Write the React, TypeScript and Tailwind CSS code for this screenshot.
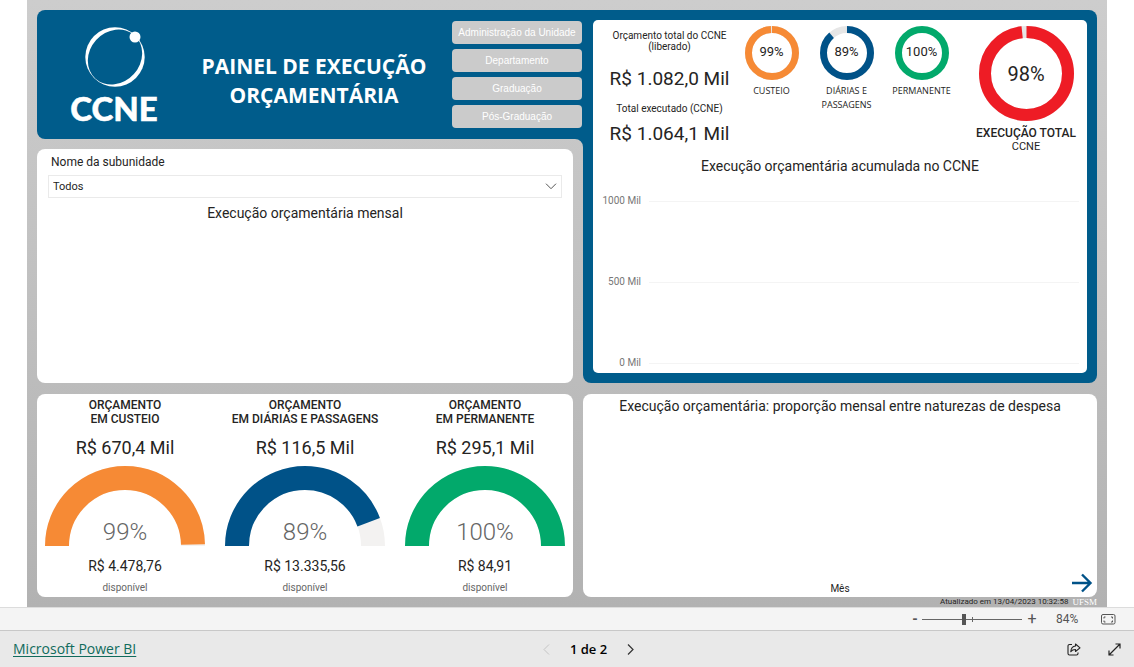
import { useState } from "react";

type Slice = {
  label: string;
  percent: number;
  text: string;
  color: string;
};

const donuts: Slice[] = [
  { label: "CUSTEIO", percent: 99.3, text: "99%", color: "#f68a35" },
  { label: "DIÁRIAS E PASSAGENS", percent: 88.6, text: "89%", color: "#005288" },
  { label: "PERMANENTE", percent: 100, text: "100%", color: "#02a96b" },
];

const gauges = [
  {
    name: "EM CUSTEIO",
    total: "R$ 670,4 Mil",
    percent: 99.3,
    text: "99%",
    available: "R$ 4.478,76",
    color: "#f68a35",
  },
  {
    name: "EM DIÁRIAS E PASSAGENS",
    total: "R$ 116,5 Mil",
    percent: 88.6,
    text: "89%",
    available: "R$ 13.335,56",
    color: "#005288",
  },
  {
    name: "EM PERMANENTE",
    total: "R$ 295,1 Mil",
    percent: 100,
    text: "100%",
    available: "R$ 84,91",
    color: "#02a96b",
  },
];

const units = [
  "Administração da Unidade",
  "Departamento",
  "Graduação",
  "Pós-Graduação",
];

const Logo = () => (
  <svg width="92" height="104" viewBox="-2 0 92 104" role="img" aria-label="CCNE">
    <mask id="ring">
      <rect x="-2" width="92" height="104" fill="#fff" />
      <ellipse
        cx="45"
        cy="34"
        rx="29.2"
        ry="25.4"
        transform="rotate(-48 45 34)"
        fill="#000"
      />
    </mask>
    <circle cx="45" cy="34" r="29.7" fill="#fff" mask="url(#ring)" />
    <circle cx="65" cy="14" r="5.5" fill="#fff" />
    <text
      x="44"
      y="98"
      textAnchor="middle"
      fill="#fff"
      stroke="#fff"
      strokeWidth="0.5"
      fontSize="33"
      fontWeight="900"
      fontFamily="Lato, sans-serif"
    >
      CCNE
    </text>
  </svg>
);

const Donut = ({
  slice,
  size,
  thickness,
}: {
  slice: Slice;
  size: number;
  thickness: number;
}) => {
  const r = (size - thickness) / 2;
  return (
    <svg width={size} height={size} viewBox={`0 0 ${size} ${size}`}>
      <circle
        cx={size / 2}
        cy={size / 2}
        r={r}
        fill="none"
        stroke="#e6e6e6"
        strokeWidth={slice.percent < 100 ? thickness : 0}
      />
      <circle
        cx={size / 2}
        cy={size / 2}
        r={r}
        fill="none"
        stroke={slice.color}
        strokeWidth={thickness}
        pathLength={100}
        strokeDasharray={`${slice.percent} ${100 - slice.percent}`}
        transform={`rotate(-90 ${size / 2} ${size / 2})`}
      />
    </svg>
  );
};

const Gauge = ({ percent, color }: { percent: number; color: string }) => (
  <svg width="160" height="80" viewBox="0 0 160 80">
    <path
      d="M12 80a68 68 0 0 1 136 0"
      fill="none"
      stroke="#f3f2f1"
      strokeWidth="24"
    />
    <path
      d="M12 80a68 68 0 0 1 136 0"
      fill="none"
      stroke={color}
      strokeWidth="24"
      pathLength={100}
      strokeDasharray={`${percent} 100`}
    />
  </svg>
);

const Header = () => (
  <header className="flex h-[129px] items-center rounded-l-lg bg-[#005c8b] pl-[31px] pr-px">
    <Logo />
    <h1 className="grow pt-3 pl-4 text-center text-[21px] leading-[29px] font-bold text-white font-['Open_Sans',sans-serif]">
      PAINEL DE EXECUÇÃO
      <br />
      ORÇAMENTÁRIA
    </h1>
    <nav className="flex w-[130px] flex-col gap-[5px]">
      {units.map((unit) => (
        <button
          key={unit}
          className="h-[23px] rounded bg-[#cbcbcb] text-[10px] whitespace-nowrap text-white font-['Liberation_Sans',sans-serif]"
        >
          {unit}
        </button>
      ))}
    </nav>
  </header>
);

const MonthlyCard = () => (
  <section className="flex grow flex-col rounded-lg bg-white px-[11px] pt-1">
    <label htmlFor="subunidade" className="px-[3px] text-xs leading-[18px]">
      Nome da subunidade
    </label>
    <div className="relative mt-1 flex items-center">
      <select
        id="subunidade"
        className="h-[23px] w-full appearance-none border border-[#eaeaea] bg-white px-1 pt-0.5 text-[11px]"
      >
        <option>Todos</option>
      </select>
      <svg
        className="pointer-events-none absolute right-[5px]"
        width="12"
        height="7"
        viewBox="0 0 12 7"
        fill="none"
        stroke="#555"
      >
        <path d="M1 .7l5 5 5-5" />
      </svg>
    </div>
    <h2 className="mt-[5px] text-center text-sm">Execução orçamentária mensal</h2>
  </section>
);

const Summary = () => {
  const total: Slice = {
    label: "EXECUÇÃO TOTAL",
    percent: 98.3,
    text: "98%",
    color: "#ee1c25",
  };

  return (
    <div className="grid grid-cols-[141fr_75fr_75fr_75fr_128fr] text-center">
      <div className="pl-3 pt-2.5 whitespace-nowrap">
        <p className="text-[10px] leading-[11px]">
          Orçamento total do CCNE
          <br />
          (liberado)
        </p>
        <p className="mt-4 text-[19px] leading-[22px]">R$ 1.082,0 Mil</p>
        <p className="mt-3 text-[10px] leading-[14px]">Total executado (CCNE)</p>
        <p className="mt-[7px] text-[19px] leading-[22px]">R$ 1.064,1 Mil</p>
      </div>
      {donuts.map((slice) => (
        <div key={slice.label} className="flex flex-col items-center pt-1.5">
          <div className="relative">
            <Donut slice={slice} size={54} thickness={7} />
            <span className="absolute inset-0 flex items-center justify-center pb-0.5 text-[13px]">
              {slice.text}
            </span>
          </div>
          <p className="mt-1 text-[9px] leading-[14px] font-['Open_Sans',sans-serif]">
            {slice.label}
          </p>
        </div>
      ))}
      <div className="flex flex-col items-center pt-1.5 pl-1.5">
        <div className="relative">
          <Donut slice={total} size={95} thickness={12} />
          <span className="absolute inset-0 flex items-center justify-center text-xl">
            {total.text}
          </span>
        </div>
        <p className="mt-[5px] whitespace-nowrap text-xs leading-[14px] font-medium">
          {total.label}
        </p>
        <p className="text-[11px] leading-[14px]">CCNE</p>
      </div>
    </div>
  );
};

const AccumulatedChart = () => (
  <div className="flex grow flex-col pb-[3px]">
    <h2 className="mt-0.5 text-center text-sm">
      Execução orçamentária acumulada no CCNE
    </h2>
    <div className="mt-[18px] flex grow flex-col justify-between pr-2">
      {["1000 Mil", "500 Mil", "0 Mil"].map((tick) => (
        <div key={tick} className="flex items-center gap-2">
          <span className="w-12 text-right text-[10px] leading-[14px] text-[#777]">
            {tick}
          </span>
          <span className="h-px grow bg-[#f4f4f4]" />
        </div>
      ))}
    </div>
  </div>
);

const GaugesCard = () => (
  <section className="rounded-lg bg-white pt-1">
    <div className="-mx-0.5 grid grid-cols-3 text-center">
      {gauges.map((gauge) => (
        <div key={gauge.name} className="flex flex-col items-center">
          <h3 className="whitespace-nowrap text-xs leading-[14px] font-medium">
            ORÇAMENTO
            <br />
            {gauge.name}
          </h3>
          <p className="mt-[11px] text-lg leading-[22px]">{gauge.total}</p>
          <div className="relative mt-[7px]">
            <Gauge percent={gauge.percent} color={gauge.color} />
            <span className="absolute inset-x-0 bottom-0 text-2xl leading-7 font-light text-[#666]">
              {gauge.text}
            </span>
          </div>
          <p className="mt-[11px] text-sm leading-[18px]">{gauge.available}</p>
          <p className="mt-1.5 text-[10px] leading-[14px] text-[#666]">
            disponível
          </p>
        </div>
      ))}
    </div>
  </section>
);

const ProportionCard = () => (
  <section className="flex flex-col rounded-lg bg-white">
    <h2 className="pt-0.5 text-center text-sm">
      Execução orçamentária: proporção mensal entre naturezas de despesa
    </h2>
    <div className="mt-auto grid grid-cols-[1fr_auto_1fr] items-end">
      <p className="col-start-2 pb-px text-[10px] leading-[14px]">Mês</p>
      <button
        aria-label="Próxima página do painel"
        className="justify-self-end pr-1 pb-1"
      >
        <svg
          width="22"
          height="20"
          viewBox="0 0 22 20"
          fill="none"
          stroke="#005288"
          strokeWidth="2.400"
        >
          <path d="M1 10h18M11 1.500l8.500 8.500-8.500 8.500" />
        </svg>
      </button>
    </div>
  </section>
);

const ZoomBar = () => {
  const [zoom, setZoom] = useState(84);

  return (
    <div className="flex h-6 items-center justify-end border-y border-t-[#dcdcdc] border-b-[#c8c8c8] bg-[#f4f4f4] pr-[18px] text-[#555]">
      <button
        aria-label="Reduzir zoom"
        onClick={() => setZoom(zoom - 10)}
        className="flex w-3.5 justify-center text-sm font-bold leading-none"
      >
        -
      </button>
      <div className="relative flex items-center">
        <input
          type="range"
          aria-label="Zoom"
          min={0}
          max={200}
          value={zoom}
          onChange={(e) => setZoom(Number(e.target.value))}
          className="h-[11px] w-[100px] appearance-none bg-[linear-gradient(#666,#666)] bg-[length:100%_1px] bg-center bg-no-repeat [&::-webkit-slider-thumb]:h-[11px] [&::-webkit-slider-thumb]:w-1 [&::-webkit-slider-thumb]:appearance-none [&::-webkit-slider-thumb]:bg-[#555]"
        />
        <span className="absolute left-1/2 h-[5px] w-px bg-[#666]" />
      </div>
      <button
        aria-label="Aumentar zoom"
        onClick={() => setZoom(zoom + 10)}
        className="flex w-5 justify-center text-base leading-none"
      >
        +
      </button>
      <span className="w-[45px] pl-3.5 text-xs">{zoom}%</span>
      <button aria-label="Ajustar à página" className="ml-3.5">
        <svg
          width="15"
          height="11"
          viewBox="0 0 15 11"
          fill="none"
          stroke="currentColor"
        >
          <rect x=".5" y=".5" width="13.500" height="9.500" rx="1.500" />
          <path d="M3 4.500V3h1.500M10 3h1.500v1.500M11.500 6.500V8H10M4.500 8H3V6.500" />
        </svg>
      </button>
    </div>
  );
};

const Footer = () => (
  <footer className="grid h-9 grid-cols-[1fr_auto_1fr] items-center bg-[#e9e9e9] px-[13px] text-sm font-['Open_Sans',sans-serif]">
    <a
      href="https://powerbi.microsoft.com"
      className="justify-self-start text-[#106b5c] underline underline-offset-2"
    >
      Microsoft Power BI
    </a>
    <div className="flex items-center gap-5 pl-[43px]">
      <button aria-label="Página anterior" disabled className="text-[#c4c4c4]">
        <svg width="7" height="11" viewBox="0 0 7 11" fill="none" stroke="currentColor">
          <path d="M6 .5l-5 5 5 5" />
        </svg>
      </button>
      <span className="text-[13px] font-semibold text-black">1 de 2</span>
      <button aria-label="Próxima página" className="text-[#333]">
        <svg
          width="7"
          height="11"
          viewBox="0 0 7 11"
          fill="none"
          stroke="currentColor"
          strokeWidth="1.200"
        >
          <path d="M1 .5l5 5-5 5" />
        </svg>
      </button>
    </div>
    <div className="flex items-center gap-[27px] justify-self-end text-[#222]">
      <button aria-label="Compartilhar">
        <svg
          width="14"
          height="13"
          viewBox="0 0 14 13"
          fill="none"
          stroke="currentColor"
          strokeWidth="1.100"
          strokeLinejoin="round"
        >
          <path d="M5 1.500H2.500a1.500 1.500 0 0 0-1.500 1.500v7.500A1.500 1.500 0 0 0 2.500 12h7a1.500 1.500 0 0 0 1.500-1.500V9.500" />
          <path d="M8.500 1l4.500 3.800-4.500 3.700V6.500C6.500 6.500 5 7 3.800 8.700 4 5.500 5.500 3.300 8.500 3z" />
        </svg>
      </button>
      <button aria-label="Tela cheia">
        <svg
          width="13"
          height="13"
          viewBox="0 0 13 13"
          fill="none"
          stroke="currentColor"
          strokeWidth="1.200"
        >
          <path d="M1 12L12 1M7.500 1H12v4.500M1 7.500V12h4.500" />
        </svg>
      </button>
    </div>
  </footer>
);

const App = () => {
  return (
    <div className="flex min-h-screen flex-col bg-white text-[#252423] font-['Roboto',sans-serif]">
      <main className="mx-auto flex w-full max-w-[1080px] grow flex-col bg-linear-to-b from-[#cdcdcd] to-[#b2b2b2] px-2.5 pt-2.5">
        <div className="grid grow-[373] basis-0 grid-cols-[546fr_514fr]">
          <div className="flex flex-col">
            <Header />
            <div className="relative flex grow flex-col pt-2.5 pr-2.5">
              {/* inner corner where the header joins the blue panel */}
              <svg className="absolute right-0 top-0" width="8" height="8">
                <path d="M0 0h8v8a8 8 0 0 0-8-8z" fill="#005c8b" />
              </svg>
              <MonthlyCard />
            </div>
          </div>
          <div className="flex flex-col rounded-r-lg rounded-bl-lg bg-[#005c8b] p-2.5">
            <section className="flex grow flex-col rounded-[5px] bg-white">
              <Summary />
              <AccumulatedChart />
            </section>
          </div>
        </div>
        <div className="mt-[11px] grid grow-[203] basis-0 grid-cols-[536fr_514fr] gap-2.5">
          <GaugesCard />
          <ProportionCard />
        </div>
        <div className="flex h-2.5 items-center justify-end gap-1 text-[8px] leading-[10px]">
          <span>Atualizado em 13/04/2023 10:32:58</span>
          <span className="text-[9px] text-white font-['Liberation_Serif',serif]">
            UFSM
          </span>
        </div>
      </main>
      <ZoomBar />
      <Footer />
    </div>
  );
};

export default App;
